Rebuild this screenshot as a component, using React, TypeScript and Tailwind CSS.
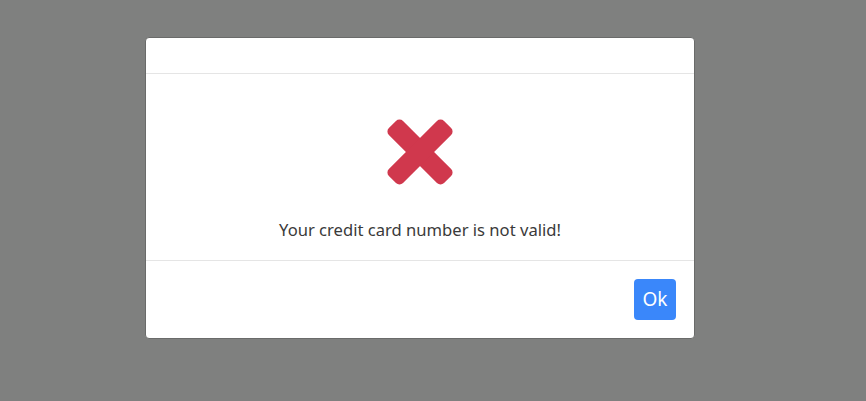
import React from "react";

export default function App() {
  return (
    <div className="w-[866px] h-[401px] bg-[#7f807f] flex" style={{ fontFamily: '"Noto Sans", sans-serif' }}>
      <div className="ml-[145px] mt-[37px] w-[550px] h-[302px] bg-white rounded-[4px] border border-[#6a6b6a] flex flex-col overflow-hidden">
        <div className="h-[36px] border-b border-[#e5e5e5]" />
        <div className="flex-1 flex flex-col items-center">
          <svg className="mt-[42px] ml-[-1px]" width="72" height="72" viewBox="0 0 72 72">
            <g transform="translate(36 36) rotate(45)" fill="#d0384d">
              <rect x="-39" y="-10" width="78" height="20" rx="5" />
              <rect x="-10" y="-39" width="20" height="78" rx="5" />
            </g>
          </svg>
          <div className="mt-[32px] text-[16.6px] text-[#3a3a3a] leading-[20px]">Your credit card number is not valid!</div>
        </div>
        <div className="h-[78px] border-t border-[#e5e5e5] flex items-center justify-end pr-[18px] pb-[1px]">
          <button className="w-[42px] h-[41px] rounded-[4px] bg-[#3a87fa] text-white text-[19px] leading-none">Ok</button>
        </div>
      </div>
    </div>
  );
}
